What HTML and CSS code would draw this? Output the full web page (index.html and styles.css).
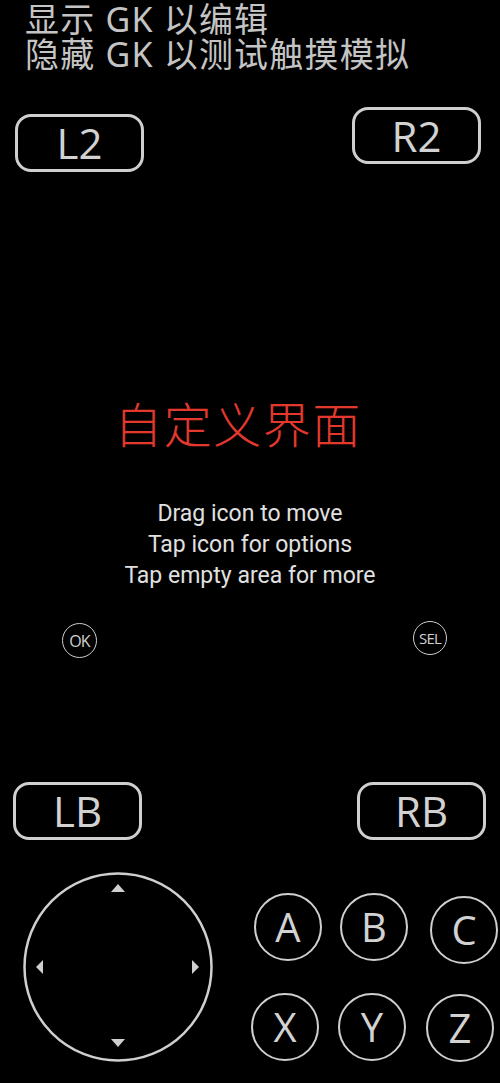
FILE: index.html
```html
<!DOCTYPE html>
<html lang="zh-CN">
<head>
<meta charset="UTF-8">
<meta name="viewport" content="width=device-width, initial-scale=1.0">
<title>自定义界面</title>
<link rel="stylesheet" href="styles.css">
</head>
<body>
    <div class="screen">
        <div class="hint-top">
            <div>显示 GK 以编辑</div>
            <div>隐藏 GK 以测试触摸模拟</div>
        </div>

        <h1 class="title">自定义界面</h1>

        <div class="help">
            <p>Drag icon to move</p>
            <p>Tap icon for options</p>
            <p>Tap empty area for more</p>
        </div>

        <div class="pad">
            <div class="key key-l2">L2</div>
            <div class="key key-r2">R2</div>
            <div class="small small-ok">OK</div>
            <div class="small small-sel">SEL</div>
            <div class="key key-lb">LB</div>
            <div class="key key-rb">RB</div>

            <svg class="stick" width="190" height="190" viewBox="0 0 190 190">
                <circle cx="95" cy="95" r="93.5" fill="none" stroke="#cfcfcf" stroke-width="2.5"/>
                <polygon points="88,20 102,20 95,12" fill="#cfcfcf"/>
                <polygon points="88,167 102,167 95,175" fill="#cfcfcf"/>
                <polygon points="20,88 20,102 13,95" fill="#cfcfcf"/>
                <polygon points="169,88 169,102 176,95" fill="#cfcfcf"/>
            </svg>

            <div class="btn btn-a">A</div>
            <div class="btn btn-b">B</div>
            <div class="btn btn-c">C</div>
            <div class="btn btn-x">X</div>
            <div class="btn btn-y">Y</div>
            <div class="btn btn-z">Z</div>
        </div>
    </div>
</body>
</html>
```
FILE: styles.css
```css
body {
    margin: 0;
    background: #000;
    font-family: "Noto Sans", "Noto Sans CJK SC", sans-serif;
}

.screen {
    position: relative;
    width: 500px;
    height: 1083px;
    overflow: hidden;
    background: #000;
}

.hint-top {
    padding: 2px 0 0 25px;
    font-size: 34px;
    line-height: 35px;
    letter-spacing: 1.2px;
    color: #c4c4c4;
    white-space: nowrap;
}

.title {
    margin: 321px 0 0;
    padding-right: 24px;
    text-align: center;
    font-family: "Noto Sans CJK SC", sans-serif;
    font-weight: 300;
    font-size: 48px;
    line-height: 58px;
    letter-spacing: 1.5px;
    color: #e2382d;
}

.help {
    margin-top: 47px;
    text-align: center;
    font-family: Roboto, "Liberation Sans", sans-serif;
    font-size: 23px;
    line-height: 31px;
    color: #e0e0e0;
}

.help p {
    margin: 0;
}

.pad {
    position: absolute;
    inset: 0;
    font-family: "Open Sans", "Liberation Sans", sans-serif;
    color: #d2d2d2;
}

.key {
    position: absolute;
    box-sizing: border-box;
    width: 129px;
    height: 58px;
    border: 3px solid #cfcfcf;
    border-radius: 16px;
    display: flex;
    align-items: center;
    justify-content: center;
    font-size: 42px;
    line-height: 1;
}

.key-l2 { left: 15px; top: 114px; }
.key-r2 { left: 352px; top: 107px; height: 57px; }
.key-lb { left: 13px; top: 782px; }
.key-rb { left: 357px; top: 782px; }

.small {
    position: absolute;
    box-sizing: border-box;
    width: 35px;
    height: 35px;
    border: 1.5px solid #cfcfcf;
    border-radius: 50%;
    display: flex;
    align-items: center;
    justify-content: center;
    font-size: 16px;
    letter-spacing: -0.8px;
}

.small-ok { left: 62px; top: 623px; }
.small-sel { left: 413px; top: 621px; width: 34px; height: 34px; font-size: 15px; }

.stick {
    position: absolute;
    left: 23px;
    top: 872px;
}

.btn {
    position: absolute;
    box-sizing: border-box;
    width: 68px;
    height: 68px;
    border: 2px solid #cfcfcf;
    border-radius: 50%;
    display: flex;
    align-items: center;
    justify-content: center;
    font-size: 40px;
    line-height: 1;
}

.btn-a { left: 254px; top: 893px; }
.btn-b { left: 340px; top: 893px; }
.btn-c { left: 430px; top: 896px; }
.btn-x { left: 251px; top: 993px; }
.btn-y { left: 338px; top: 993px; }
.btn-z { left: 426px; top: 994px; }
```
